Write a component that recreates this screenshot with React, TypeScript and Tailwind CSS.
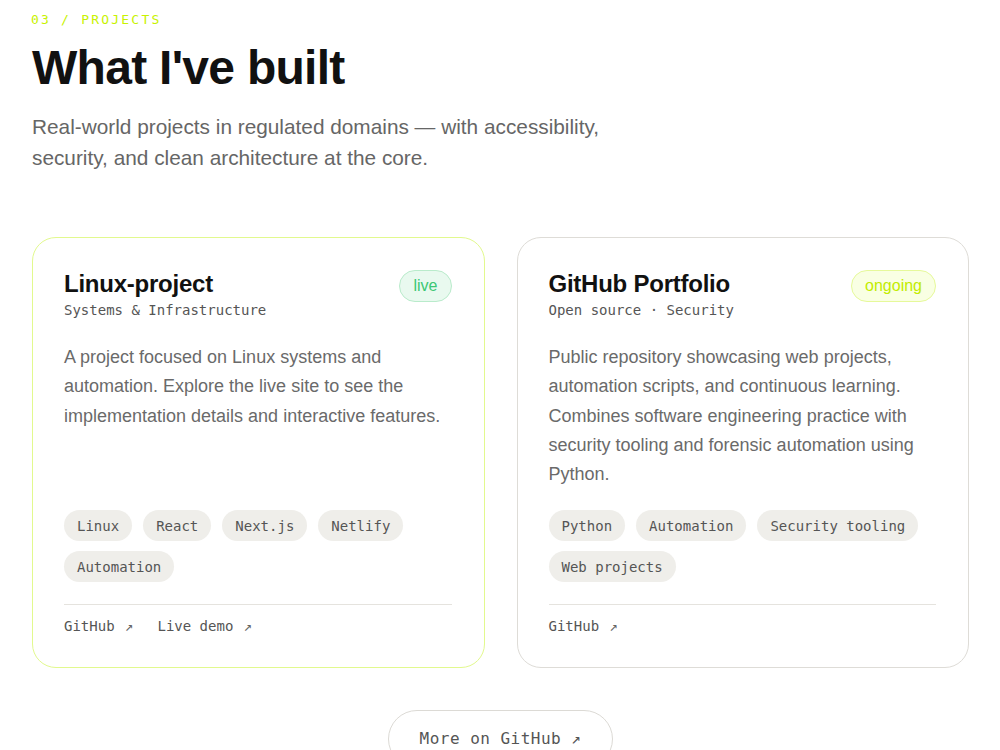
type Project = {
  title: string;
  subtitle: string;
  status: "live" | "ongoing";
  description: string;
  tags: string[];
  links: string[];
};

const projects: Project[] = [
  {
    title: "Linux-project",
    subtitle: "Systems & Infrastructure",
    status: "live",
    description:
      "A project focused on Linux systems and automation. Explore the live site to see the implementation details and interactive features.",
    tags: ["Linux", "React", "Next.js", "Netlify", "Automation"],
    links: ["GitHub", "Live demo"],
  },
  {
    title: "GitHub Portfolio",
    subtitle: "Open source · Security",
    status: "ongoing",
    description:
      "Public repository showcasing web projects, automation scripts, and continuous learning. Combines software engineering practice with security tooling and forensic automation using Python.",
    tags: ["Python", "Automation", "Security tooling", "Web projects"],
    links: ["GitHub"],
  },
];

const mono = "font-['DejaVu_Sans_Mono',monospace]";
const sans = "font-['Liberation_Sans',Arial,sans-serif]";

function StatusBadge({ status }: { status: Project["status"] }) {
  if (status === "live") {
    return (
      <span className="h-8 px-[13px] flex items-center rounded-full border border-[#b9ebcb] bg-[#e9f9ef] text-[#3cc774] text-base">
        live
      </span>
    );
  }
  return (
    <span className="h-8 px-[13px] flex items-center rounded-full border border-[#e6f99a] bg-[#f9ffe3] text-[#c2ec00] text-base">
      ongoing
    </span>
  );
}

function ProjectCard({ p }: { p: Project }) {
  return (
    <div
      className={`flex flex-col rounded-[24px] border bg-white pl-[31px] pr-8 pt-8 pb-[31px] ${
        p.status === "live" ? "border-[#e2f98e]" : "border-[#dedcd7]"
      }`}
    >
      {/* header */}
      <div className="flex items-start justify-between">
        <div>
          <h3 className="text-2xl leading-7 font-bold tracking-[-0.01em] text-[#111]">{p.title}</h3>
          <p className={`${mono} text-sm leading-5 text-[#555] mt-[2px]`}>{p.subtitle}</p>
        </div>
        <StatusBadge status={p.status} />
      </div>

      <p className="mt-[23px] text-[18px] leading-[29.25px] text-[#6a6a6a]">{p.description}</p>

      {/* tags */}
      <div className="mt-auto pt-[21px] flex flex-wrap gap-x-[11px] gap-y-[10px]">
        {p.tags.map((t) => (
          <span
            key={t}
            className={`${mono} h-[31px] px-[13px] flex items-center rounded-full bg-[#efeeea] text-sm text-[#555]`}
          >
            {t}
          </span>
        ))}
      </div>

      <div className="mt-[22px] border-t border-[#e5e3de] pt-[11px] flex gap-[24px]">
        {p.links.map((l) => (
          <a key={l} className={`${mono} text-sm leading-5 text-[#555]`}>
            {l} <span className="inline-block ml-[2px] text-[#666]">↗</span>
          </a>
        ))}
      </div>
    </div>
  );
}

export default function App() {
  return (
    <main className={`${sans} min-h-screen bg-white pl-8 pr-[31px] pt-[10px] overflow-hidden`}>
      <p className={`${mono} text-[13px] leading-5 tracking-[0.17em] text-[#c8f200] -ml-px`}>03 / PROJECTS</p>

      <h2 className="mt-[12px] text-[48px] leading-[52px] font-bold tracking-[-0.015em] text-[#111]">
        What I've built
      </h2>

      <p className="mt-[17px] max-w-[600px] text-[20.8px] leading-[31px] text-[#666]">
        Real-world projects in regulated domains — with accessibility, security, and clean architecture at the
        core.
      </p>

      {/* project cards */}
      <div className="mt-[64px] grid grid-cols-2 gap-8">
        {projects.map((p) => (
          <ProjectCard key={p.title} p={p} />
        ))}
      </div>

      <div className="mt-[42px] flex justify-center">
        <button
          className={`${mono} rounded-full border border-[#dcdad5] px-[31px] py-4 text-base leading-6 tracking-[0.03em] text-[#555]`}
        >
          More on GitHub ↗
        </button>
      </div>
    </main>
  );
}
